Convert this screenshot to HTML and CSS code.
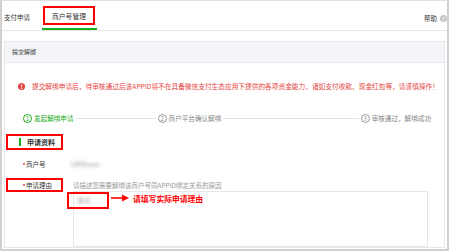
FILE: index.html
```html
<!DOCTYPE html>
<html lang="zh-CN">
<head>
    <meta charset="UTF-8">
    <title>商户号管理</title>
    <link rel="stylesheet" href="styles.css">
</head>
<body>
<div class="page">
    <div class="tabs">
        <div class="tab">支付申请</div>
        <div class="tab tab-on"><span class="mark">商户号管理</span></div>
        <div class="help">帮助<span class="help-icon">?</span></div>
    </div>
    <div class="panel">
        <div class="panel-hd">提交解绑</div>
        <div class="alert"><span class="alert-icon">!</span>提交解绑申请后，待审核通过后该APPID将不在具备微信支付生态应用下提供的各项资金能力，诸如支付收款、现金红包等，请谨慎操作！</div>
        <div class="steps">
            <div class="step step-on"><span class="num">1</span>发起解绑申请</div>
            <div class="step-line first"></div>
            <div class="step"><span class="num">2</span>商户平台确认解绑</div>
            <div class="step-line"></div>
            <div class="step"><span class="num">3</span>审核通过，解绑成功</div>
        </div>
        <div class="sec"><span class="sec-title">申请资料</span></div>
        <div class="field">
            <div class="label"><span class="lbl">商户号</span></div>
            <div class="value"><span class="blur">1488xxxx</span></div>
        </div>
        <div class="field">
            <div class="label"><span class="lbl lbl-mark">申请理由</span></div>
            <div class="value">
                <div class="tip">请描述您需要解绑该商户号同APPID绑定关系的原因</div>
                <div class="textbox">
                    <!-- 标注 -->
                    <span class="note-box"><span class="blur">测试</span></span>
                    <svg class="note-arrow" width="18" height="8" viewBox="0 0 18 8">
                        <line x1="0" y1="4" x2="13" y2="4" stroke="#f00" stroke-width="1.6"/>
                        <polygon points="11,0.5 18,4 11,7.5" fill="#f00"/>
                    </svg>
                    <span class="note-text">请填写实际申请理由</span>
                </div>
            </div>
        </div>
    </div>
</div>
</body>
</html>
```

FILE: styles.css
```css
* {
    margin: 0;
    padding: 0;
    box-sizing: border-box;
}

body {
    background: #fff;
}

.page {
    width: 449px;
    height: 251px;
    border: 2px solid #d0d0d0;
    border-top: 1px solid #e2e2e2;
    overflow: hidden;
    font-family: "Noto Sans CJK SC", "Noto Sans", sans-serif;
    font-size: 6.5px;
    color: #353535;
}

/* 顶部选项卡 */
.tabs {
    display: flex;
    height: 30px;
    border-bottom: 1px solid #e7e7eb;
}

.tab {
    width: 40px;
    padding: 10px 0 0 2px;
    line-height: 13px;
}

.tab-on {
    width: 55px;
    padding: 5px 0 0 1px;
    border-bottom: 2px solid #1aad19;
}

.mark {
    display: block;
    width: 52px;
    height: 19px;
    border: 2px solid #f00;
    padding-top: 2px;
    line-height: 13px;
    text-align: center;
    font-size: 6.8px;
}

.help {
    margin-left: auto;
    display: flex;
    align-items: center;
    gap: 3px;
    height: 12px;
    margin-top: 11px;
}

.help-icon {
    width: 7px;
    height: 7px;
    border-radius: 50%;
    background: #c4c4c4;
    color: #fff;
    font-size: 5px;
    line-height: 7px;
    text-align: center;
    font-weight: bold;
}

/* 面板 */
.panel {
    margin: 10px 2px 0;
    border: 1px solid #e7e7eb;
}

.panel-hd {
    height: 21px;
    line-height: 20px;
    padding-left: 7px;
    background: #f4f5f9;
    border-bottom: 1px solid #e7e7eb;
    font-size: 6px;
}

.alert {
    display: flex;
    align-items: center;
    margin-top: 17px;
    padding-left: 13px;
    line-height: 12px;
    color: #e64340;
    font-size: 6.7px;
    white-space: nowrap;
}

.alert-icon {
    width: 7px;
    height: 7px;
    margin-right: 7px;
    border-radius: 50%;
    background: #e64340;
    color: #fff;
    font-size: 6px;
    line-height: 7px;
    text-align: center;
    font-weight: bold;
}

/* 步骤 */
.steps {
    display: flex;
    align-items: center;
    margin-top: 20px;
    padding: 0 13px 0 18px;
    line-height: 12px;
    color: #888;
    font-size: 6.6px;
}

.step {
    display: flex;
    align-items: center;
    gap: 2px;
    white-space: nowrap;
}

.num {
    width: 9px;
    height: 9px;
    border: 1px solid #999;
    border-radius: 50%;
    font-size: 6px;
    line-height: 7px;
    text-align: center;
}

.step-on {
    color: #1aad19;
}

.step-on .num {
    border-color: #1aad19;
}

.step-line {
    flex: 1;
    height: 1px;
    margin: 0 2px;
    background: #e3e3e3;
}

.step-line.first {
    flex: none;
    width: 80px;
}

/* 申请资料 */
.sec {
    margin-top: 10px;
    padding-left: 1px;
}

.sec-title {
    display: flex;
    align-items: center;
    width: 57px;
    height: 16px;
    border: 2px solid #f00;
    padding-left: 11px;
    font-size: 7px;
    font-weight: bold;
}

.sec-title::before {
    content: "";
    width: 2px;
    height: 8px;
    margin-right: 6px;
    background: #1aad19;
}

.field {
    display: flex;
    margin-top: 8px;
}

.label {
    width: 68px;
    padding-left: 1px;
}

.lbl {
    display: flex;
    align-items: center;
    height: 12px;
    padding-left: 17px;
}

.lbl::before {
    content: "";
    width: 2px;
    height: 2px;
    margin-right: 1px;
    border-radius: 50%;
    background: #e64340;
}

.lbl-mark {
    width: 57px;
    height: 14px;
    border: 2px solid #f00;
    padding-left: 15px;
}

.value {
    line-height: 12px;
}

.blur {
    color: #a0a0a0;
    filter: blur(1.4px);
}

.value > .blur {
    margin-left: -3px;
    font-size: 7px;
}

.tip {
    padding-top: 1px;
    color: #999;
    white-space: nowrap;
}

.textbox {
    position: relative;
    width: 355px;
    height: 56px;
    border: 1px solid #e7e7eb;
}

.note-box {
    position: absolute;
    left: -7px;
    top: 0;
    width: 42px;
    height: 17px;
    border: 2px solid #f00;
    padding-left: 8px;
    line-height: 12px;
}

.note-arrow {
    position: absolute;
    left: 37px;
    top: 2px;
}

.note-text {
    position: absolute;
    left: 59px;
    top: 1px;
    line-height: 12px;
    color: #f00;
    font-size: 7.8px;
    font-weight: bold;
    white-space: nowrap;
}
```
